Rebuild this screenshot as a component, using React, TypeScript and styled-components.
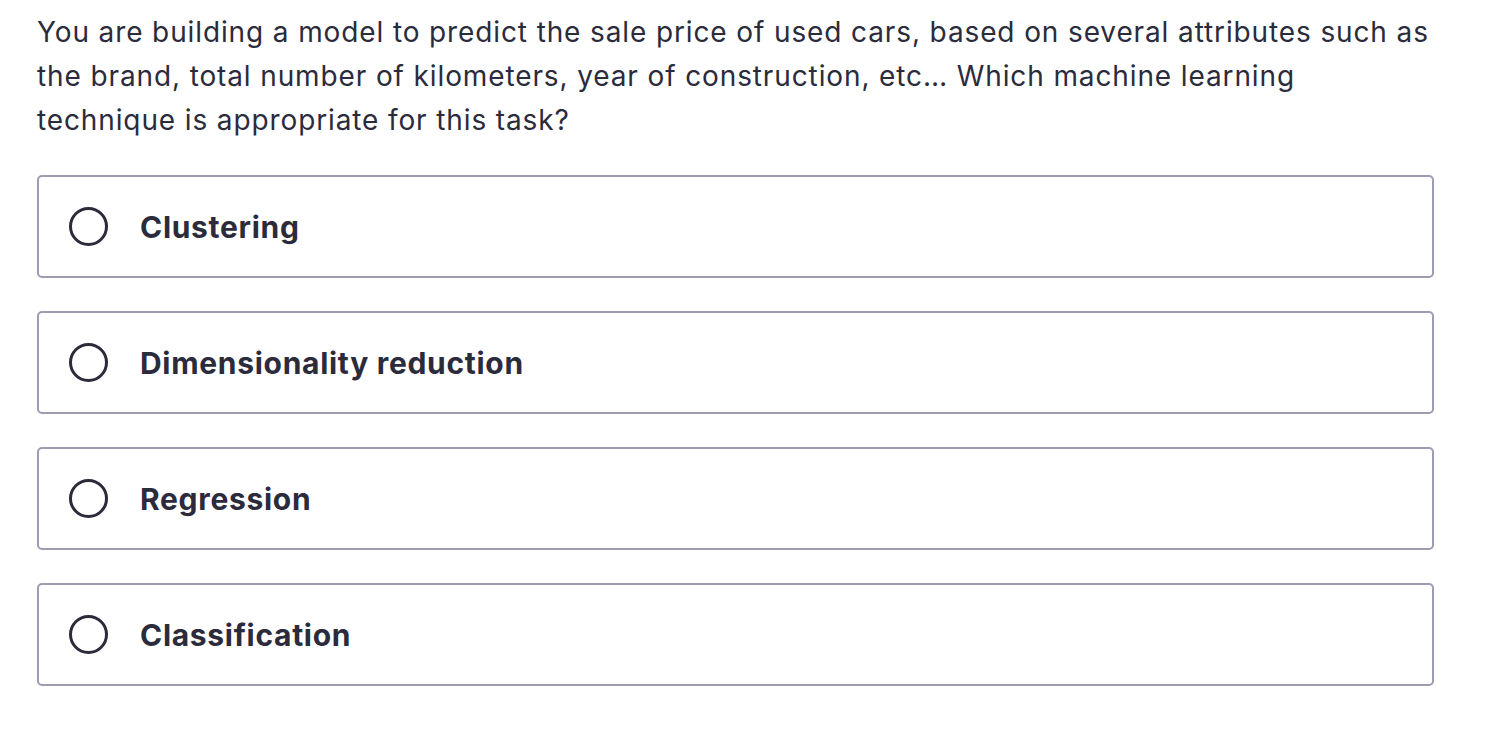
import styled, { createGlobalStyle } from 'styled-components';

const GlobalStyle = createGlobalStyle`
  html, body {
    margin: 0;
    padding: 0;
    background: #ffffff;
  }
  body {
    font-family: Inter, "Noto Sans", "Liberation Sans", sans-serif;
    color: #2b2b3c;
  }
`;

const Page = styled.div`
  padding: 10px 0 0 37px;
`;

const Question = styled.p`
  margin: 0 0 33px;
  font-size: 28px;
  line-height: 44px;
  font-weight: 400;
  color: #2b2b3c;
  letter-spacing: 0.88px;
  white-space: nowrap;
`;

const Options = styled.div`
  display: flex;
  flex-direction: column;
  gap: 33px;
  width: 1397px;
`;

const OptionCard = styled.label`
  display: flex;
  align-items: center;
  gap: 32px;
  height: 103px;
  box-sizing: border-box;
  padding: 0 30px;
  border: 2px solid #9c9cb2;
  border-radius: 5px;
  background: #ffffff;
  cursor: pointer;
`;

const Radio = styled.span`
  width: 39px;
  height: 39px;
  box-sizing: border-box;
  border: 3.5px solid #2b2b3c;
  border-radius: 50%;
  flex-shrink: 0;
`;

const OptionText = styled.span`
  font-size: 30px;
  font-weight: 700;
  color: #2b2b3c;
  letter-spacing: 0.7px;
`;

const options = ['Clustering', 'Dimensionality reduction', 'Regression', 'Classification'];

export default function App() {
  return (
    <Page>
      <GlobalStyle />
      <Question>
        You are building a model to predict the sale price of used cars, based on several attributes such as
        <br />
        the brand, total number of kilometers, year of construction, etc… Which machine learning
        <br />
        technique is appropriate for this task?
      </Question>
      <Options>
        {options.map((o) => (
          <OptionCard key={o}>
            <Radio />
            <OptionText>{o}</OptionText>
          </OptionCard>
        ))}
      </Options>
    </Page>
  );
}
